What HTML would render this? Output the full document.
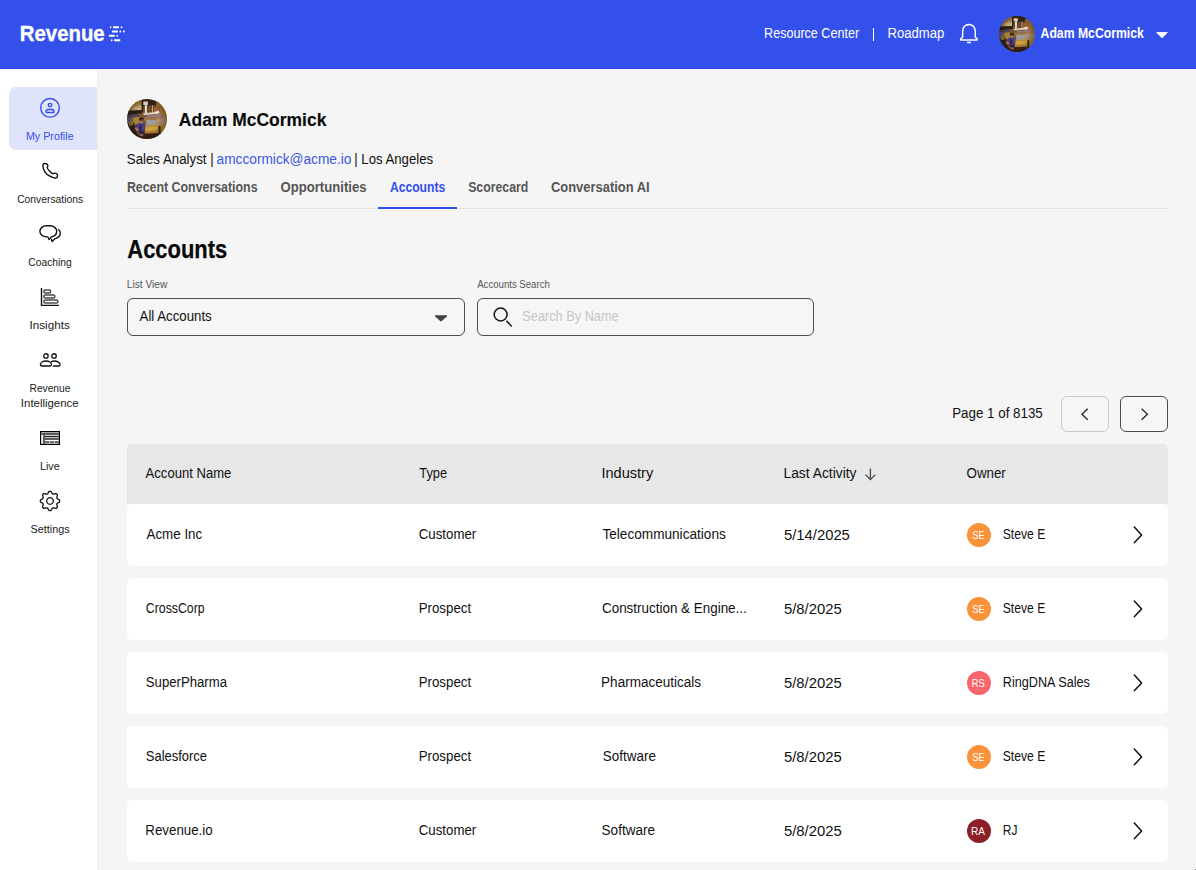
<!DOCTYPE html>
<html lang="en">
<head>
<meta charset="utf-8">
<title>Accounts</title>
<style>
*{box-sizing:border-box;margin:0;padding:0}
html,body{width:1196px;height:870px;overflow:hidden}
body{font-family:"Liberation Sans",sans-serif;background:#f5f5f5;color:#111;position:relative;font-size:14px}
.a{position:absolute}
.t{position:absolute;white-space:nowrap;line-height:1;transform-origin:0 50%;color:#111}
#hdr{position:absolute;left:0;top:0;width:1196px;height:69px;background:#3450eb}
#side{position:absolute;left:0;top:69px;width:97px;height:801px;background:#fff;box-shadow:1px 0 0 #f0f0f0}
#active{position:absolute;left:9px;top:87px;width:88px;height:63px;background:#dfe3fc;border-radius:7px 0 0 7px}
.box{position:absolute;border:1px solid #4d4d4d;border-radius:6px;background:#f6f6f6}
.row{position:absolute;left:127px;width:1041px;height:62px;background:#fff;border-radius:5px}
.av{position:absolute;left:967px;width:24px;height:24px;border-radius:50%}
svg{position:absolute;overflow:visible}
</style>
</head>
<body>
<svg width="0" height="0" style="left:-10px;top:-10px">
  <defs>
    <filter id="bl" x="-10%" y="-10%" width="120%" height="120%"><feGaussianBlur stdDeviation="0.62"/></filter>
    <radialGradient id="vg" cx="50%" cy="48%" r="52%"><stop offset="55%" stop-color="#1e0f06" stop-opacity="0"/><stop offset="100%" stop-color="#1e0f06" stop-opacity=".42"/></radialGradient>
    <clipPath id="cc"><circle cx="20" cy="20" r="20"/></clipPath>
    <g id="photo">
      <g clip-path="url(#cc)">
        <g filter="url(#bl)">
          <rect x="-3" y="-3" width="46" height="46" fill="#7a5330"/>
          <!-- top-left golden ceiling -->
          <polygon points="-3,-3 15.4,-3 15.4,12 -3,13.5" fill="#b88b33"/>
          <polygon points="6.5,7.6 14.6,6.8 14.6,11.2 4.5,11.8" fill="#cdb57f"/>
          <polygon points="9.6,5 13,4.6 13,7 9.6,7.4" fill="#aaa193"/>
          <!-- top centre dark -->
          <polygon points="15.4,-3 33,-3 30,7 15.4,8" fill="#3b2519"/>
          <polygon points="15.4,7 30,6 31,13 15.4,13" fill="#6f4a2c"/>
          <!-- right golden -->
          <polygon points="29,3 43,6 43,20 29.5,19" fill="#b07c36"/>
          <polygon points="27,8 33,7 33,13 27,13" fill="#9a6a34"/>
          <!-- dark beam left -->
          <polygon points="-3,11.8 15.2,11 15.2,14.2 -3,16.6" fill="#2a1d15"/>
          <rect x="14.6" y="-3" width="1.5" height="15" fill="#2c1e15"/>
          <!-- lamp -->
          <rect x="16.3" y="2.4" width="4.6" height="3.5" fill="#f6f1e4"/>
          <rect x="17.9" y="5.6" width="1.9" height="8.6" fill="#efe8d8"/>
          <rect x="25.1" y="6.2" width=".9" height="8" fill="#c9b79a"/>
          <!-- white shelf band -->
          <polygon points="16.5,14.2 31,12.8 31,15 16.5,16.2" fill="#d8cdb4"/>
          <polygon points="27,13 32,11.6 32.6,14 28,14.6" fill="#ece3d0"/>
          <!-- pink/purple grey band -->
          <polygon points="19.5,16.6 37,15.6 37,18 19.5,18.4" fill="#94788a"/>
          <!-- left mid: blue-grey + dark -->
          <polygon points="-3,16.4 12,14.6 12,18.4 -3,19.4" fill="#4b4654"/>
          <rect x="-3" y="18.4" width="9" height="9" fill="#5f647c"/>
          <polygon points="5.6,18.6 12.4,18 12.4,24.6 5.6,26" fill="#a98336"/>
          <!-- right mid tan -->
          <polygon points="28.5,19.4 43,18.6 43,27 28.5,27" fill="#ab9270"/>
          <polygon points="17,18.4 29,18.2 29,21.4 17,21.4" fill="#9c7648"/>
          <!-- laptop -->
          <rect x="19.1" y="21" width="9.7" height="5.7" fill="#9d9c9a"/>
          <!-- table -->
          <polygon points="17.6,26.6 41,25.6 38.4,34.2 17.6,35" fill="#bd8f33"/>
          <polygon points="19.4,28.4 30.6,27.8 30.6,31.4 19.4,32" fill="#d2a643"/>
          <rect x="31.7" y="27" width="1.8" height="7.2" fill="#2b1d14"/>
          <!-- left-bottom dark -->
          <polygon points="-3,26.4 6.8,23.4 9.6,31 11,42 -3,42" fill="#30231e"/>
          <polygon points="1.6,22.8 5.8,22.4 6.4,26 2.2,27" fill="#9c7a36"/>
          <!-- bottom dark -->
          <polygon points="8,35 43,33.6 43,43 8,43" fill="#3a2519"/>
          <!-- person -->
          <ellipse cx="14.3" cy="20.3" rx="2.2" ry="1.7" fill="#2b1d18"/>
          <ellipse cx="14.4" cy="22.5" rx="1.7" ry="1.9" fill="#bf8b6c"/>
          <rect x="12.9" y="21.5" width="3.1" height=".9" fill="#30252a"/>
          <polygon points="7.8,28.6 10.4,24.8 13,23.9 17.4,24.4 18.4,27.4 17.6,31.8 9.6,31.8" fill="#4c3b8e"/>
          <polygon points="12.4,26.2 14.6,25.8 14.4,31.6 12.4,31.6" fill="#2a2240"/>
          <polygon points="7.2,29 10,28.4 14.8,34.6 16.6,35.2 16,37.6 12.4,36.4" fill="#bb8566"/>
          <polygon points="9.6,31.8 17.6,31.8 17.6,35 12.6,35" fill="#3b2c55"/>
        </g>
        <rect x="0" y="0" width="40" height="40" fill="url(#vg)"/>
      </g>
    </g>
  </defs>
</svg>

<!-- HEADER -->
<div id="hdr"></div>
<div class="a" style="left:0;top:68px;width:1196px;height:1px;background:#2b44e6"></div>
<div class="a" style="left:97px;top:69px;width:1099px;height:1px;background:#fdfdf9"></div>
<div class="a" style="left:1195px;top:869px;width:1px;height:1px;background:#8a8a8a"></div>
<!-- logo mark -->
<svg style="left:107px;top:24px" width="20" height="20" viewBox="0 0 20 20"><g fill="#fff"><rect x="2.8" y="2.25" width="1.50" height="1.9" rx=".7"/><rect x="6" y="2.25" width="6.10" height="1.9" rx=".7"/><rect x="13.7" y="2.25" width="1.70" height="1.9" rx=".7"/><rect x="4.9" y="6.55" width="6.10" height="1.9" rx=".7"/><rect x="12.5" y="6.55" width="1.70" height="1.9" rx=".7"/><rect x="16" y="6.55" width="1.80" height="1.9" rx=".7"/><rect x="1.8" y="10.85" width="6.10" height="1.9" rx=".7"/><rect x="9.4" y="10.85" width="1.60" height="1.9" rx=".7"/><rect x="3.9" y="15.25" width="1.60" height="1.9" rx=".7"/><rect x="7" y="15.25" width="6.30" height="1.9" rx=".7"/></g></svg>
<div class="a" style="left:872.8px;top:27.5px;width:1.2px;height:13px;background:#fff"></div>
<!-- bell -->
<svg style="left:958px;top:22px" width="22" height="24" viewBox="0 0 22 24" fill="none" stroke="#fff" stroke-width="1.45" stroke-linecap="round" stroke-linejoin="round">
  <path d="M4.65 15 V9.2 C4.65 5.3 7.4 2.45 10.95 2.45 C14.5 2.45 17.25 5.3 17.25 9.2 V15 L19.2 17 V17.9 H2.7 V17 Z"/>
  <path d="M9.5 20.45 H12.4"/>
</svg>
<svg style="left:999px;top:16px" width="36" height="36" viewBox="0 0 40 40"><use href="#photo"/></svg>
<svg style="left:1156px;top:31.5px" width="12" height="6.5" viewBox="0 0 12 6.5"><path d="M.8 .6 H11.2 L6 5.8 Z" fill="#fff" stroke="#fff" stroke-width="1" stroke-linejoin="round"/></svg>

<!-- SIDEBAR -->
<div id="side"></div>
<div id="active"></div>
<!-- my profile -->
<svg style="left:39px;top:97px" width="22" height="22" viewBox="0 0 22 22" fill="none" stroke="#3450eb" stroke-width="1.4">
  <circle cx="11" cy="10.85" r="9.3"/>
  <circle cx="11" cy="8" r="1.65"/>
  <path d="M7 14.6 C7 13.2 8.7 12.3 11 12.3 C13.3 12.3 15.1 13.2 15.1 14.6 C15.1 15.2 14.8 15.5 14.3 15.5 H7.8 C7.3 15.5 7 15.2 7 14.6 Z" stroke-linejoin="round"/>
</svg>
<!-- conversations (phone) -->
<svg style="left:40px;top:161px" width="20" height="20" viewBox="0 0 20 20" fill="none" stroke="#111" stroke-width="1.35" stroke-linejoin="round" stroke-linecap="round">
  <path d="M2.8 4.3 C2.9 3.2 4.2 2.4 5.3 2.5 C6.8 2.6 8 3.6 7.9 4.7 C7.8 5.5 7.2 6.2 7.4 7.1 C7.8 8.3 8.6 9.2 9.4 9.9 C10.4 10.9 11.5 11.9 12.7 12.6 C13.4 13 14.1 12.25 14.9 12.2 C16.4 12.1 17.6 13.1 17.55 14.4 C17.5 15.8 16.8 17 15.7 17.2 C14.6 17.35 13.3 16.7 12.2 16.25 C11.6 16 11 15.75 10.4 15.4 C9.2 14.8 8 14.1 6.9 13.2 C5.8 12.2 4.9 10.9 4.3 9.6 C3.7 8.5 3.3 7.3 3.1 6.1 C3 5.5 2.75 4.9 2.8 4.3 Z"/>
</svg>
<!-- coaching -->
<svg style="left:38px;top:223px" width="24" height="22" viewBox="0 0 24 22" fill="none" stroke="#111" stroke-width="1.35" stroke-linejoin="round" stroke-linecap="round">
  <path d="M8.4 2.75 H12.2 A6.5 5.6 0 0 1 18.7 8.3 A6.5 5.6 0 0 1 13.4 13.8 L11 16.6 L9.9 13.9 H8.4 A6.5 5.6 0 0 1 1.9 8.3 A6.5 5.6 0 0 1 8.4 2.75 Z"/>
  <path d="M20.5 6.5 C22 7.5 22.5 9 22.3 10.6 C22 13.4 19.6 15 17.2 15.6 L14.1 18.5 L13.5 16.3"/>
</svg>
<!-- insights -->
<svg style="left:40px;top:286px" width="20" height="22" viewBox="0 0 20 22" fill="none">
  <path d="M1.5 2 V19.4 H19" stroke="#111" stroke-width="1.4"/>
  <g stroke="#4d4d4d" stroke-width="1.5">
    <rect x="3.8" y="3.9" width="6.9" height="3.1" rx="1.55"/>
    <rect x="3.8" y="8.9" width="11.1" height="3.1" rx="1.55"/>
    <rect x="3.8" y="13.9" width="14.1" height="3.1" rx="1.55"/>
  </g>
</svg>
<!-- revenue intelligence (people) -->
<svg style="left:38px;top:350px" width="24" height="20" viewBox="0 0 24 20" fill="none" stroke="#111" stroke-width="1.3" stroke-linejoin="round" stroke-linecap="round">
  <circle cx="7.95" cy="5.95" r="2.2"/>
  <circle cx="16.05" cy="5.95" r="2.2"/>
  <path d="M2.4 14.6 C2.4 12.6 4.8 11 7.95 11 C11.1 11 13.5 12.6 13.5 14.6 C13.5 15.6 13 16 12.3 16 H3.6 C2.9 16 2.4 15.6 2.4 14.6 Z"/>
  <path d="M13.4 11.6 C14.2 11.2 15.2 11 16.2 11 C19.4 11 22.1 12.8 22.1 14.7 C22.1 15.6 21.6 16 20.9 16 H15.4"/>
</svg>
<!-- live -->
<svg style="left:40px;top:431px" width="20" height="14" viewBox="0 0 20 14">
  <rect x=".5" y=".5" width="19" height="13" fill="#5c5c5c" stroke="#000" stroke-width="1"/>
  <rect x="1" y="1.3" width="17.8" height=".7" fill="#c4c4c4"/>
  <rect x="1.3" y="3.8" width="1.6" height="8.9" fill="#fff"/>
  <rect x="5" y="4" width="13.7" height=".9" fill="#e2e2e2"/>
  <rect x="5" y="5.1" width="13" height=".8" fill="#111"/>
  <rect x="5" y="6.2" width="13.7" height=".8" fill="#dcdcdc"/>
  <rect x="5" y="9" width="13.7" height="1.2" fill="#fff"/>
  <rect x="9.1" y="10.4" width=".8" height="1.6" fill="#ddd"/>
  <rect x="13.9" y="10.4" width="1" height="1.6" fill="#ddd"/>
  <rect x="5" y="12.2" width="13.7" height=".7" fill="#d8d8d8"/>
</svg>
<!-- settings gear -->
<svg style="left:39px;top:490px" width="22" height="22" viewBox="-11 -11 22 22" fill="none" stroke="#111" stroke-width="1.3" stroke-linejoin="round">
  <path d="M0.00 -9.70L0.47 -9.64L0.93 -9.44L1.35 -9.11L1.68 -8.43L1.94 -7.75L2.24 -7.38L2.54 -7.11L2.87 -6.93L3.23 -6.83L3.64 -6.80L4.11 -6.86L4.78 -7.15L5.48 -7.39L6.02 -7.33L6.48 -7.15L6.86 -6.86L7.15 -6.48L7.33 -6.02L7.39 -5.48L7.15 -4.78L6.86 -4.11L6.80 -3.64L6.83 -3.23L6.93 -2.87L7.11 -2.54L7.38 -2.24L7.75 -1.94L8.43 -1.68L9.11 -1.35L9.44 -0.93L9.64 -0.47L9.70 -0.00L9.64 0.47L9.44 0.93L9.11 1.35L8.43 1.68L7.75 1.94L7.38 2.24L7.11 2.54L6.93 2.87L6.83 3.23L6.80 3.64L6.86 4.11L7.15 4.78L7.39 5.48L7.33 6.02L7.15 6.48L6.86 6.86L6.48 7.15L6.02 7.33L5.48 7.39L4.78 7.15L4.11 6.86L3.64 6.80L3.23 6.83L2.87 6.93L2.54 7.11L2.24 7.38L1.94 7.75L1.68 8.43L1.35 9.11L0.93 9.44L0.47 9.64L0.00 9.70L-0.47 9.64L-0.93 9.44L-1.35 9.11L-1.68 8.43L-1.94 7.75L-2.24 7.38L-2.54 7.11L-2.87 6.93L-3.23 6.83L-3.64 6.80L-4.11 6.86L-4.78 7.15L-5.48 7.39L-6.02 7.33L-6.48 7.15L-6.86 6.86L-7.15 6.48L-7.33 6.02L-7.39 5.48L-7.15 4.78L-6.86 4.11L-6.80 3.64L-6.83 3.23L-6.93 2.87L-7.11 2.54L-7.38 2.24L-7.75 1.94L-8.43 1.68L-9.11 1.35L-9.44 0.93L-9.64 0.47L-9.70 0.00L-9.64 -0.47L-9.44 -0.93L-9.11 -1.35L-8.43 -1.68L-7.75 -1.94L-7.38 -2.24L-7.11 -2.54L-6.93 -2.87L-6.83 -3.23L-6.80 -3.64L-6.86 -4.11L-7.15 -4.78L-7.39 -5.48L-7.33 -6.02L-7.15 -6.48L-6.86 -6.86L-6.48 -7.15L-6.02 -7.33L-5.48 -7.39L-4.78 -7.15L-4.11 -6.86L-3.64 -6.80L-3.23 -6.83L-2.87 -6.93L-2.54 -7.11L-2.24 -7.38L-1.94 -7.75L-1.68 -8.43L-1.35 -9.11L-0.93 -9.44L-0.47 -9.64Z"/>
  <circle cx="0" cy="0" r="3.3"/>
</svg>

<!-- CONTENT -->
<svg style="left:127px;top:99px" width="40" height="40" viewBox="0 0 40 40"><use href="#photo"/></svg>
<div class="a" style="left:127px;top:208px;width:1041px;height:1px;background:#e3e3e3"></div>
<div class="a" style="left:378px;top:207px;width:79px;height:2px;background:#3450eb"></div>

<div class="box" style="left:127px;top:298px;width:338px;height:38px"></div>
<svg style="left:434px;top:314.5px" width="14" height="7" viewBox="0 0 14 7"><path d="M1 .8 H13 L7 6.2 Z" fill="#444" stroke="#444" stroke-width="1" stroke-linejoin="round"/></svg>
<div class="box" style="left:477px;top:298px;width:337px;height:38px"></div>
<svg style="left:492px;top:306px" width="22" height="22" viewBox="0 0 22 22" fill="none" stroke="#111" stroke-width="1.5" stroke-linecap="butt"><circle cx="8.65" cy="8.5" r="6.45"/><path d="M14.4 14.8 L19.7 20.4"/></svg>

<!-- pagination -->
<div class="box" style="left:1061px;top:396px;width:48px;height:36px;border-color:#c9c9c9;border-radius:6px"></div>
<div class="box" style="left:1120px;top:396px;width:48px;height:36px;border-color:#4a4a4a;border-radius:6px"></div>
<svg style="left:1079px;top:406px" width="12" height="16" viewBox="0 0 12 16" fill="none" stroke="#222" stroke-width="1.25" stroke-linejoin="miter"><path d="M8.7 2.7 L2.9 8.2 L8.7 13.7"/></svg>
<svg style="left:1138px;top:406px" width="12" height="16" viewBox="0 0 12 16" fill="none" stroke="#222" stroke-width="1.25" stroke-linejoin="miter"><path d="M3.6 2.7 L9.4 8.2 L3.6 13.7"/></svg>

<!-- table -->
<div class="a" style="left:127px;top:444px;width:1041px;height:60px;background:#e7e7e7;border-radius:5px 5px 0 0"></div>
<svg style="left:864px;top:467px" width="13" height="14" viewBox="0 0 13 14" fill="none" stroke="#4a4a4a" stroke-width="1.35" stroke-linecap="butt" stroke-linejoin="miter"><path d="M6.4 1.4 V12.4 M1.5 7.6 L6.4 12.6 L11.3 7.6"/></svg>
<div class="row" style="top:504px"></div>
<div class="av" style="top:523px;background:#fa923a"></div>
<svg style="left:1131px;top:524px" width="14" height="22" viewBox="0 0 14 22" fill="none" stroke="#111" stroke-width="1.5" stroke-linecap="round" stroke-linejoin="round"><path d="M3.3 3 L10.6 11 L3.3 18.8"/></svg>
<div class="row" style="top:578px"></div>
<div class="av" style="top:597px;background:#fa923a"></div>
<svg style="left:1131px;top:598px" width="14" height="22" viewBox="0 0 14 22" fill="none" stroke="#111" stroke-width="1.5" stroke-linecap="round" stroke-linejoin="round"><path d="M3.3 3 L10.6 11 L3.3 18.8"/></svg>
<div class="row" style="top:652px"></div>
<div class="av" style="top:671px;background:#f8656b"></div>
<svg style="left:1131px;top:672px" width="14" height="22" viewBox="0 0 14 22" fill="none" stroke="#111" stroke-width="1.5" stroke-linecap="round" stroke-linejoin="round"><path d="M3.3 3 L10.6 11 L3.3 18.8"/></svg>
<div class="row" style="top:726px"></div>
<div class="av" style="top:745px;background:#fa923a"></div>
<svg style="left:1131px;top:746px" width="14" height="22" viewBox="0 0 14 22" fill="none" stroke="#111" stroke-width="1.5" stroke-linecap="round" stroke-linejoin="round"><path d="M3.3 3 L10.6 11 L3.3 18.8"/></svg>
<div class="row" style="top:800px"></div>
<div class="av" style="top:819px;background:#8c2026"></div>
<svg style="left:1131px;top:820px" width="14" height="22" viewBox="0 0 14 22" fill="none" stroke="#111" stroke-width="1.5" stroke-linecap="round" stroke-linejoin="round"><path d="M3.3 3 L10.6 11 L3.3 18.8"/></svg>
<div class="t" style="left:19px;top:23px;font-size:22px;transform:translateX(0.81px) scaleX(0.9251);font-weight:bold;color:#fff;-webkit-text-stroke:0.35px #fff">Revenue</div>
<div class="t" style="left:764px;top:26px;font-size:14px;transform:translateX(0.08px) scaleX(0.8976);color:#fff">Resource Center</div>
<div class="t" style="left:887px;top:26px;font-size:14px;transform:translateX(0.53px) scaleX(0.9356);color:#fff">Roadmap</div>
<div class="t" style="left:1040px;top:26px;font-size:14px;transform:translateX(0.56px) scaleX(0.8730);font-weight:bold;color:#fff">Adam McCormick</div>
<div class="t" style="left:178px;top:110px;font-size:19px;transform:translateX(0.84px) scaleX(0.9194);font-weight:bold;color:#0a0a0a;-webkit-text-stroke:0.15px #0a0a0a">Adam McCormick</div>
<div class="t" style="left:126px;top:152px;font-size:14px;transform:translateX(0.79px) scaleX(0.9486)">Sales Analyst |</div>
<div class="t" style="left:216px;top:152px;font-size:14px;transform:translateX(0.61px) scaleX(0.9770);color:#3b55e6">amccormick@acme.io</div>
<div class="t" style="left:354px;top:152px;font-size:14px;transform:translateX(0.22px) scaleX(0.9415)">| Los Angeles</div>
<div class="t" style="left:126px;top:180px;font-size:14px;transform:translateX(0.92px) scaleX(0.8834);font-weight:bold;color:#555">Recent Conversations</div>
<div class="t" style="left:280px;top:180px;font-size:14px;transform:translateX(0.53px) scaleX(0.9366);font-weight:bold;color:#555">Opportunities</div>
<div class="t" style="left:389px;top:180px;font-size:14px;transform:translateX(0.97px) scaleX(0.8653);font-weight:bold;color:#3450eb">Accounts</div>
<div class="t" style="left:468px;top:180px;font-size:14px;transform:translateX(0.16px) scaleX(0.8791);font-weight:bold;color:#555">Scorecard</div>
<div class="t" style="left:550px;top:180px;font-size:14px;transform:translateX(0.94px) scaleX(0.9242);font-weight:bold;color:#555">Conversation AI</div>
<div class="t" style="left:127px;top:237px;font-size:25px;transform:translateX(0.34px) scaleX(0.8766);font-weight:bold;color:#0a0a0a;-webkit-text-stroke:0.25px #0a0a0a">Accounts</div>
<div class="t" style="left:126px;top:280px;font-size:10px;transform:translateX(0.73px) scaleX(1.0205);color:#555">List View</div>
<div class="t" style="left:139px;top:309px;font-size:14px;transform:translateX(0.60px) scaleX(0.9452)">All Accounts</div>
<div class="t" style="left:477px;top:280px;font-size:10px;transform:translateX(0.20px) scaleX(0.9600);color:#555">Accounts Search</div>
<div class="t" style="left:522px;top:309px;font-size:14px;transform:translateX(0.32px) scaleX(0.9100);color:#c6c6c6">Search By Name</div>
<div class="t" style="left:952px;top:406px;font-size:14px;transform:translateX(0.21px) scaleX(0.9534)">Page 1 of 8135</div>
<div class="t" style="left:145px;top:466px;font-size:14px;transform:translateX(0.60px) scaleX(0.9337)">Account Name</div>
<div class="t" style="left:419px;top:466px;font-size:14px;transform:translateX(0.27px) scaleX(0.9186)">Type</div>
<div class="t" style="left:601px;top:466px;font-size:14px;transform:translateX(0.40px) scaleX(1.0412)">Industry</div>
<div class="t" style="left:783px;top:466px;font-size:14px;transform:translateX(0.47px) scaleX(0.9876)">Last Activity</div>
<div class="t" style="left:966px;top:466px;font-size:14px;transform:translateX(0.59px) scaleX(0.9491)">Owner</div>
<div class="t" style="left:146px;top:527px;font-size:14px;transform:translateX(0.50px) scaleX(0.9552)">Acme Inc</div>
<div class="t" style="left:418px;top:527px;font-size:14px;transform:translateX(0.79px) scaleX(0.9473)">Customer</div>
<div class="t" style="left:602px;top:527px;font-size:14px;transform:translateX(0.46px) scaleX(0.9722)">Telecommunications</div>
<div class="t" style="left:783px;top:528px;font-size:14px;transform:translateX(0.91px) scaleX(1.0590)">5/14/2025</div>
<div class="t" style="left:972px;top:530px;font-size:11px;transform:translateX(0.27px) scaleX(0.8509);color:#fff">SE</div>
<div class="t" style="left:1002px;top:527px;font-size:14px;transform:translateX(0.75px) scaleX(0.8691)">Steve E</div>
<div class="t" style="left:145px;top:601px;font-size:14px;transform:translateX(0.84px) scaleX(0.8779)">CrossCorp</div>
<div class="t" style="left:418px;top:601px;font-size:14px;transform:translateX(0.71px) scaleX(0.9481)">Prospect</div>
<div class="t" style="left:601px;top:601px;font-size:14px;transform:translateX(0.98px) scaleX(0.9591)">Construction &amp; Engine...</div>
<div class="t" style="left:783px;top:602px;font-size:14px;transform:translateX(0.90px) scaleX(1.0610)">5/8/2025</div>
<div class="t" style="left:972px;top:604px;font-size:11px;transform:translateX(0.27px) scaleX(0.8509);color:#fff">SE</div>
<div class="t" style="left:1002px;top:601px;font-size:14px;transform:translateX(0.75px) scaleX(0.8691)">Steve E</div>
<div class="t" style="left:145px;top:675px;font-size:14px;transform:translateX(0.79px) scaleX(0.9404)">SuperPharma</div>
<div class="t" style="left:418px;top:675px;font-size:14px;transform:translateX(0.71px) scaleX(0.9481)">Prospect</div>
<div class="t" style="left:601px;top:675px;font-size:14px;transform:translateX(0.09px) scaleX(0.9661)">Pharmaceuticals</div>
<div class="t" style="left:783px;top:676px;font-size:14px;transform:translateX(0.90px) scaleX(1.0610)">5/8/2025</div>
<div class="t" style="left:971px;top:678px;font-size:11px;transform:translateX(0.85px) scaleX(0.8509);color:#fff">RS</div>
<div class="t" style="left:1002px;top:675px;font-size:14px;transform:translateX(0.77px) scaleX(0.9024)">RingDNA Sales</div>
<div class="t" style="left:145px;top:749px;font-size:14px;transform:translateX(0.81px) scaleX(0.9251)">Salesforce</div>
<div class="t" style="left:418px;top:749px;font-size:14px;transform:translateX(0.71px) scaleX(0.9481)">Prospect</div>
<div class="t" style="left:602px;top:749px;font-size:14px;transform:translateX(0.78px) scaleX(0.9619)">Software</div>
<div class="t" style="left:783px;top:750px;font-size:14px;transform:translateX(0.90px) scaleX(1.0610)">5/8/2025</div>
<div class="t" style="left:972px;top:752px;font-size:11px;transform:translateX(0.27px) scaleX(0.8509);color:#fff">SE</div>
<div class="t" style="left:1002px;top:749px;font-size:14px;transform:translateX(0.75px) scaleX(0.8691)">Steve E</div>
<div class="t" style="left:145px;top:823px;font-size:14px;transform:translateX(0.31px) scaleX(0.9507)">Revenue.io</div>
<div class="t" style="left:418px;top:823px;font-size:14px;transform:translateX(0.79px) scaleX(0.9473)">Customer</div>
<div class="t" style="left:601px;top:823px;font-size:14px;transform:translateX(0.57px) scaleX(0.9674)">Software</div>
<div class="t" style="left:783px;top:824px;font-size:14px;transform:translateX(0.90px) scaleX(1.0610)">5/8/2025</div>
<div class="t" style="left:971px;top:826px;font-size:11px;transform:translateX(0.09px) scaleX(0.9123);color:#fff">RA</div>
<div class="t" style="left:1002px;top:823px;font-size:14px;transform:translateX(0.83px) scaleX(0.8542)">RJ</div>
<div class="t" style="left:25px;top:131px;font-size:11px;transform:translateX(0.93px) scaleX(0.9747);color:#3450eb">My Profile</div>
<div class="t" style="left:17px;top:194px;font-size:11px;transform:translateX(0.13px) scaleX(0.9381);color:#1a1a1a">Conversations</div>
<div class="t" style="left:28px;top:257px;font-size:11px;transform:translateX(0.33px) scaleX(0.9348);color:#1a1a1a">Coaching</div>
<div class="t" style="left:29px;top:320px;font-size:11px;transform:translateX(0.43px) scaleX(1.0658);color:#1a1a1a">Insights</div>
<div class="t" style="left:29px;top:383px;font-size:11px;transform:translateX(0.58px) scaleX(0.9247);color:#1a1a1a">Revenue</div>
<div class="t" style="left:20px;top:398px;font-size:11px;transform:translateX(0.86px) scaleX(1.0378);color:#1a1a1a">Intelligence</div>
<div class="t" style="left:40px;top:461px;font-size:11px;transform:translateX(0.03px) scaleX(0.9707);color:#1a1a1a">Live</div>
<div class="t" style="left:30px;top:524px;font-size:11px;transform:translateX(0.41px) scaleX(0.9872);color:#1a1a1a">Settings</div>
</body>
</html>
